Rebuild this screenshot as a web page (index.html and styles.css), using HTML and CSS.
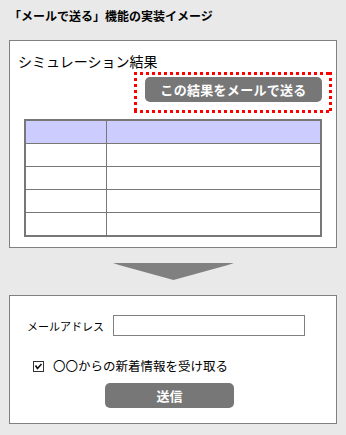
FILE: index.html
```html
<!DOCTYPE html>
<html lang="ja">
<head>
    <meta charset="UTF-8">
    <title>「メールで送る」機能の実装イメージ</title>
    <link rel="stylesheet" href="styles.css">
</head>
<body>
    <h1 class="page-title">「メールで送る」機能の実装イメージ</h1>

    <!-- Result panel -->
    <section class="panel result-panel">
        <h2 class="result-title">シミュレーション結果</h2>
        <div class="highlight">
            <button class="gray-btn send-result">この結果をメールで送る</button>
        </div>
        <table class="result-table">
            <tr class="head"><td class="col-key"></td><td></td></tr>
            <tr><td class="col-key"></td><td></td></tr>
            <tr><td class="col-key"></td><td></td></tr>
            <tr><td class="col-key"></td><td></td></tr>
            <tr><td class="col-key"></td><td></td></tr>
        </table>
    </section>

    <div class="arrow">
        <svg width="121" height="17" viewBox="0 0 121 17">
            <path d="M0 0 L121 0 L115 2 L60.5 17 L6 2 Z" fill="#808080"/>
        </svg>
    </div>

    <!-- Mail form panel -->
    <section class="panel mail-panel">
        <div class="form-row">
            <label class="mail-label" for="mail">メールアドレス</label>
            <input class="mail-input" id="mail" type="text">
        </div>
        <div class="check-row">
            <svg class="check-box" width="11" height="11" viewBox="0 0 11 11">
                <rect x="0.5" y="0.5" width="10" height="10" fill="#fff" stroke="#333"/>
                <path d="M2.5 4.5 L4.5 7.5 L8.5 3" fill="none" stroke="#111" stroke-width="1.6"/>
            </svg>
            <span class="check-text">〇〇からの新着情報を受け取る</span>
        </div>
        <button class="gray-btn submit-btn">送信</button>
    </section>
</body>
</html>
```

FILE: styles.css
```css
body {
    margin: 0;
    padding: 8px 9px 0;
    background: #e9e9e9;
    color: #000;
    font-family: "Noto Sans CJK JP", "Liberation Sans", sans-serif;
}

.page-title {
    margin: 0 0 16px;
    font-size: 12px;
    line-height: 16px;
    font-weight: bold;
}

.panel {
    background: #fff;
    border: 1px solid #808080;
}

.result-panel {
    padding: 12px 4px 10px 8px;
}

.result-title {
    margin: 0;
    font-size: 14px;
    line-height: 16px;
    font-weight: normal;
}

.highlight {
    margin: 3px 0 0 auto;
    padding: 5px 7px 5px 8px;
    box-sizing: border-box;
    width: 198px;
    height: 41px;
    background:
        repeating-linear-gradient(90deg, #f00 0 3px, transparent 3px 6px) top left / 100% 3px no-repeat,
        repeating-linear-gradient(90deg, #f00 0 3px, transparent 3px 6px) bottom left / 100% 3px no-repeat,
        repeating-linear-gradient(180deg, #f00 0 3px, transparent 3px 6px) top left / 3px 100% no-repeat,
        repeating-linear-gradient(180deg, #f00 0 3px, transparent 3px 6px) top right / 3px 100% no-repeat;
}

.gray-btn {
    display: block;
    height: 25px;
    padding: 0;
    border: none;
    border-radius: 5px;
    background: #777;
    color: #fff;
    font-family: inherit;
    font-size: 13px;
    font-weight: bold;
    line-height: 25px;
}

.send-result {
    width: 177px;
    margin-left: 3px;
    letter-spacing: 0.3px;
}

.result-table {
    width: 298px;
    margin: 6px 0 0 6px;
    border-collapse: collapse;
    border: 2px solid #777;
}

.result-table td {
    height: 22px;
    padding: 0;
    border: 1px solid #777;
}

.result-table .col-key {
    width: 80px;
}

.result-table .head td {
    background: #ccf;
}

.arrow {
    display: flex;
    justify-content: center;
    margin: 15px 0 15px;
}

.arrow svg {
    display: block;
}

.mail-panel {
    padding: 19px 0 15px;
}

.form-row {
    display: flex;
    align-items: center;
    padding-left: 17px;
}

.mail-label {
    width: 86px;
    font-size: 11px;
    line-height: 16px;
}

.mail-input {
    width: 192px;
    height: 21px;
    margin: 0;
    padding: 0 3px;
    box-sizing: border-box;
    border: 1px solid #808080;
    background: #fff;
}

.check-row {
    display: flex;
    align-items: center;
    margin-top: 22px;
    padding-left: 23px;
    height: 16px;
}

.check-box {
    display: block;
    flex: none;
}

.check-text {
    margin-left: 9px;
    font-size: 12.5px;
    line-height: 16px;
}

.submit-btn {
    width: 129px;
    margin: 9px 0 0 95px;
}
```
